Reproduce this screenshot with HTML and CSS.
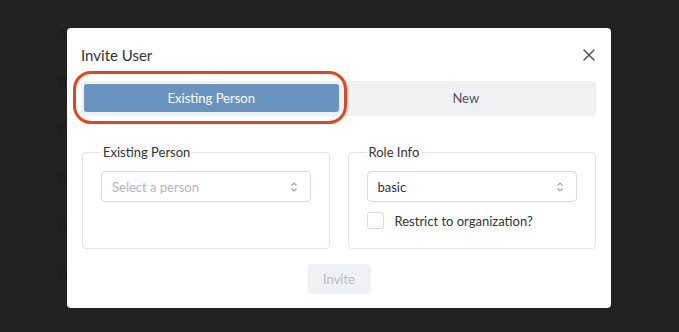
FILE: index.html
```html
<!DOCTYPE html>
<html lang="en">
<head>
  <meta charset="UTF-8">
  <title>Invite User</title>
  <link rel="stylesheet" href="styles.css">
</head>
<body>

  <!-- page behind the dialog -->
  <div class="page">
    <div class="row">Alice</div>
    <div class="row">Bob</div>
    <div class="row">Carol</div>
    <div class="row">Dave</div>
    <div class="row">Erin</div>
    <div class="row">Frank</div>
  </div>

  <div class="modal">
    <div class="modal-head">
      <h2>Invite User</h2>
      <button class="close" aria-label="Close">
        <svg width="12" height="12" viewBox="0 0 12 12"><path d="M1 1L11 11M11 1L1 11" stroke="#555" stroke-width="1.5" stroke-linecap="round"/></svg>
      </button>
    </div>

    <div class="tabs">
      <div class="tab active">Existing Person<span class="ring"></span></div>
      <div class="tab">New</div>
    </div>

    <div class="groups">
      <fieldset class="group">
        <legend>Existing Person</legend>
        <div class="select placeholder">
          <span>Select a person</span>
          <svg class="arrows" width="8" height="12" viewBox="0 0 8 12"><path d="M1.5 4.5L4 2L6.5 4.5M1.5 7.5L4 10L6.5 7.5" fill="none" stroke="#9a9da5" stroke-width="1.1"/></svg>
        </div>
      </fieldset>
      <fieldset class="group">
        <legend>Role Info</legend>
        <div class="select">
          <span>basic</span>
          <svg class="arrows" width="8" height="12" viewBox="0 0 8 12"><path d="M1.5 4.5L4 2L6.5 4.5M1.5 7.5L4 10L6.5 7.5" fill="none" stroke="#9a9da5" stroke-width="1.1"/></svg>
        </div>
        <label class="check"><span class="box"></span>Restrict to organization?</label>
      </fieldset>
    </div>

    <div class="actions">
      <button class="invite" disabled>Invite</button>
    </div>
  </div>

</body>
</html>
```

FILE: styles.css
```css
body {
  margin: 0;
  background: #222;
  font-family: "Lato", "Noto Sans", sans-serif;
  color: #333;
  height: 332px;
  overflow: hidden;
}

.page {
  padding: 26px 0 0 58px;
}

.row {
  height: 48px;
  font-size: 13px;
  color: #1c1c1c;
}

.modal {
  position: absolute;
  left: 67px;
  top: 28px;
  width: 515px;
  height: 266px;
  padding: 0 15px 14px 14px;
  background: #fff;
  border-radius: 4px;
}

.modal-head {
  display: flex;
  align-items: center;
  justify-content: space-between;
  height: 53px;
}

.modal-head h2 {
  margin: 0;
  font-size: 15px;
  font-weight: 400;
  color: #333;
}

.close {
  border: none;
  background: none;
  padding: 0;
  margin-right: 1px;
  display: flex;
  cursor: pointer;
}

.tabs {
  display: flex;
  background: #f0f1f3;
  border-radius: 4px;
  padding: 3px 3px 4px;
}

.tab {
  flex: 1;
  height: 28px;
  line-height: 28px;
  text-align: center;
  font-size: 13px;
  color: #555;
  border-radius: 3px;
  position: relative;
}

.tab.active {
  background: #6894bf;
  color: #fff;
}

.ring {
  position: absolute;
  left: -11px;
  right: -8px;
  top: -13px;
  bottom: -12px;
  border: 3px solid #e8431c;
  border-radius: 18px;
}

.groups {
  display: grid;
  grid-template-columns: 1fr 1fr;
  gap: 18px;
  margin-top: 28px;
}

.group {
  margin: 0;
  border: 1px solid #e3e4e8;
  border-radius: 4px;
  padding: 11px 18px 19px;
  min-width: 0;
}

.group:first-child {
  margin-left: 1px;
}

.group legend {
  font-size: 13px;
  padding: 0 2px;
  color: #333;
}

.select {
  display: flex;
  align-items: center;
  justify-content: space-between;
  height: 29px;
  border: 1px solid #d9dbe1;
  border-radius: 4px;
  padding: 0 12px 0 10px;
  font-size: 13px;
  color: #333;
}

.select.placeholder {
  color: #b2b5bd;
}

.check {
  display: flex;
  align-items: center;
  margin-top: 10px;
  font-size: 13px;
  color: #333;
}

.box {
  width: 15px;
  height: 15px;
  border: 1px solid #d9dbe1;
  border-radius: 3px;
  margin-right: 11px;
}

.actions {
  display: flex;
  justify-content: center;
  margin-top: 15px;
}

.invite {
  width: 63px;
  height: 30px;
  border: none;
  border-radius: 4px;
  background: #f0f1f3;
  color: #b9bcc3;
  font-family: inherit;
  font-size: 13px;
  margin-left: 1px;
}
```
